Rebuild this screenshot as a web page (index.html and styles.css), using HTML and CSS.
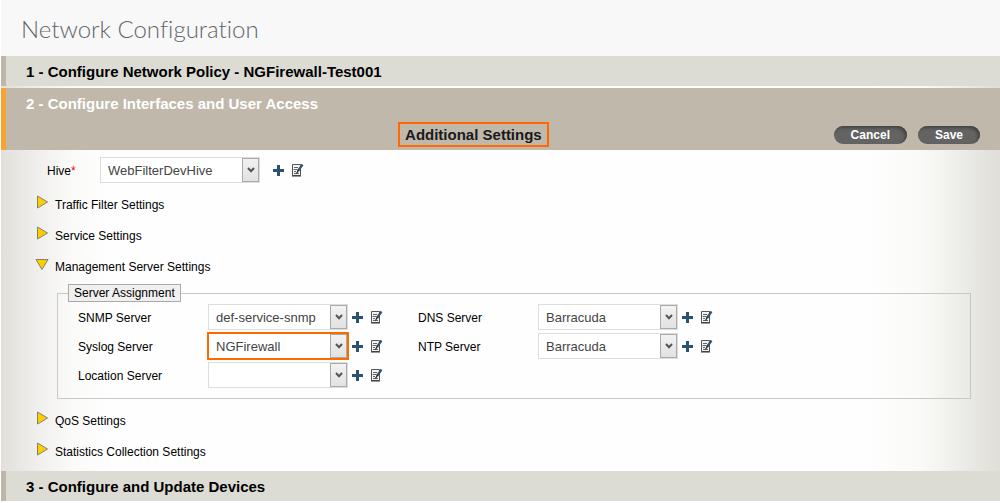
FILE: index.html
```html
<!DOCTYPE html>
<html lang="en">
<head>
  <meta charset="UTF-8">
  <title>Network Configuration</title>
  <meta name="viewport" content="width=device-width, initial-scale=1.0">
  <link rel="stylesheet" href="styles.css">
</head>
<body>

  <!-- shared icons -->
  <svg class="sprite" aria-hidden="true">
    <symbol id="plus" viewBox="0 0 11 11">
      <path d="M4 0h3v4h4v3H7v4H4V7H0V4h4z" fill="#2c5272"/>
    </symbol>
    <symbol id="edit" viewBox="0 0 13 14">
      <path d="M1.5 1.5h8v11h-8z" fill="#f4f4f4" stroke="#555"/>
      <path d="M1 13h9" stroke="#333"/>
      <path d="M3 4.500h4M2.500 6.500h4M3 8.500h2M3 10.500h5" stroke="#666"/>
      <path d="M11.500 1.500L7 8" stroke="#34536f" stroke-width="2.200"/>
      <path d="M7.500 7L5.500 10.500" stroke="#222" stroke-width="1.200"/>
    </symbol>
    <symbol id="chevron" viewBox="0 0 8 6">
      <path d="M1 1l3 3.200L7 1" fill="none" stroke="#555" stroke-width="2"/>
    </symbol>
    <symbol id="closed" viewBox="0 0 14 14">
      <path d="M2.500 1v12L12.500 7z" fill="#fc0" stroke="#85816f"/>
    </symbol>
    <symbol id="open" viewBox="0 0 14 14">
      <path d="M1 2.500h12L7 12.500z" fill="#fc0" stroke="#85816f"/>
    </symbol>
  </svg>

  <header class="page-header">
    <h1>Network Configuration</h1>
  </header>

  <main class="steps">
    <h2 class="step">1 - Configure Network Policy - NGFirewall-Test001</h2>

    <section class="current">
      <h2>2 - Configure Interfaces and User Access</h2>
      <div class="toolbar">
        <h3>Additional Settings</h3>
        <div class="actions">
          <button type="button">Cancel</button>
          <button type="button">Save</button>
        </div>
      </div>
    </section>

    <form class="settings">
      <div class="field hive">
        <label for="hive">Hive<span class="required">*</span></label>
        <div class="select">
          <select id="hive"><option>WebFilterDevHive</option></select>
          <span class="arrow"><svg><use href="#chevron"/></svg></span>
        </div>
        <button type="button" class="icon" aria-label="Add"><svg class="plus"><use href="#plus"/></svg></button>
        <button type="button" class="icon" aria-label="Edit"><svg class="edit"><use href="#edit"/></svg></button>
      </div>

      <button type="button" class="group"><svg><use href="#closed"/></svg><span>Traffic Filter Settings</span></button>
      <button type="button" class="group"><svg><use href="#closed"/></svg><span>Service Settings</span></button>
      <button type="button" class="group" aria-expanded="true"><svg><use href="#open"/></svg><span>Management Server Settings</span></button>

      <fieldset>
        <legend>Server Assignment</legend>
        <div class="servers">
          <div class="field">
            <label for="snmp">SNMP Server</label>
            <div class="select">
              <select id="snmp"><option>def-service-snmp</option></select>
              <span class="arrow"><svg><use href="#chevron"/></svg></span>
            </div>
            <button type="button" class="icon" aria-label="Add"><svg class="plus"><use href="#plus"/></svg></button>
            <button type="button" class="icon" aria-label="Edit"><svg class="edit"><use href="#edit"/></svg></button>
          </div>
          <div class="field">
            <label for="dns">DNS Server</label>
            <div class="select">
              <select id="dns"><option>Barracuda</option></select>
              <span class="arrow"><svg><use href="#chevron"/></svg></span>
            </div>
            <button type="button" class="icon" aria-label="Add"><svg class="plus"><use href="#plus"/></svg></button>
            <button type="button" class="icon" aria-label="Edit"><svg class="edit"><use href="#edit"/></svg></button>
          </div>
          <div class="field">
            <label for="syslog">Syslog Server</label>
            <div class="select highlight">
              <select id="syslog"><option>NGFirewall</option></select>
              <span class="arrow"><svg><use href="#chevron"/></svg></span>
            </div>
            <button type="button" class="icon" aria-label="Add"><svg class="plus"><use href="#plus"/></svg></button>
            <button type="button" class="icon" aria-label="Edit"><svg class="edit"><use href="#edit"/></svg></button>
          </div>
          <div class="field">
            <label for="ntp">NTP Server</label>
            <div class="select">
              <select id="ntp"><option>Barracuda</option></select>
              <span class="arrow"><svg><use href="#chevron"/></svg></span>
            </div>
            <button type="button" class="icon" aria-label="Add"><svg class="plus"><use href="#plus"/></svg></button>
            <button type="button" class="icon" aria-label="Edit"><svg class="edit"><use href="#edit"/></svg></button>
          </div>
          <div class="field">
            <label for="location">Location Server</label>
            <div class="select">
              <select id="location"><option></option></select>
              <span class="arrow"><svg><use href="#chevron"/></svg></span>
            </div>
            <button type="button" class="icon" aria-label="Add"><svg class="plus"><use href="#plus"/></svg></button>
            <button type="button" class="icon" aria-label="Edit"><svg class="edit"><use href="#edit"/></svg></button>
          </div>
        </div>
      </fieldset>

      <button type="button" class="group"><svg><use href="#closed"/></svg><span>QoS Settings</span></button>
      <button type="button" class="group"><svg><use href="#closed"/></svg><span>Statistics Collection Settings</span></button>
    </form>

    <h2 class="step">3 - Configure and Update Devices</h2>
  </main>

</body>
</html>
```
FILE: styles.css
```css
* {
  box-sizing: border-box;
  margin: 0;
  padding: 0;
}

body {
  background: #fff;
  color: #000;
  font-family: "Liberation Sans", Arial, sans-serif;
  font-size: 12px;
  padding-left: 1px;
}

button, select {
  font-family: inherit;
  border: none;
  background: none;
}

.sprite {
  display: none;
}

.page-header {
  background: #f8f8f8;
  height: 56px;
  padding: 14px 20px 0;
}

h1 {
  font-family: Lato, sans-serif;
  font-size: 24px;
  font-weight: 300;
  font-variant-ligatures: none;
  line-height: 30px;
  color: #63666a;
}

h2 {
  font-size: 15px;
  line-height: 18px;
}

.steps {
  background: linear-gradient(to right, #e1e0da 0, #f1f0ee 40px, #fafaf9 70px, #fefefe 110px, #fefefe calc(100% - 130px), #f9f9f7 calc(100% - 75px), #edede9 calc(100% - 40px), #dfded8 100%);
}

.step {
  background: #dcdcd4;
  border-left: 5px solid #bdb6a9;
  padding: 7px 20px 5px;
}

.current {
  margin-top: 2px;
  background: #bfb8ab;
  border-left: 5px solid #f7a233;
  padding: 7px 0 3px;
}

.current h2 {
  color: #fff;
  padding-left: 20px;
}

/* title sits slightly left of the middle, buttons at the right */
.toolbar {
  display: grid;
  grid-template-columns: 10fr auto 11fr;
  align-items: center;
  padding-right: 20px;
  margin-top: 9px;
}

.toolbar h3 {
  grid-column: 2;
  font-size: 15px;
  line-height: 21px;
  color: #1a1a1a;
  border: 2px solid #ff6a00;
  padding: 0 5px;
}

.actions {
  display: flex;
  justify-content: flex-end;
  gap: 11px;
}

.actions button {
  background: #636363;
  color: #fff;
  font-size: 12px;
  font-weight: bold;
  line-height: 18px;
  padding: 0 17px;
  border-radius: 9px;
  box-shadow: inset -2px 2px 3px #444;
}

.settings {
  padding: 7px 29px 4px 34px;
}

.field {
  display: flex;
  align-items: center;
}

.field label {
  width: 130px;
  line-height: 14px;
  padding-top: 2px;
}

.hive {
  margin-bottom: 6px;
}

.hive label {
  width: 65px;
  padding-left: 12px;
}

.required {
  color: #f00;
}

.select {
  position: relative;
  width: 140px;
  height: 26px;
  margin-right: 4px;
}

.hive .select {
  width: 160px;
  margin-right: 13px;
}

.select select {
  appearance: none;
  width: 100%;
  height: 100%;
  background: #fff;
  border: 1px solid #ddd;
  color: #444;
  font-size: 13px;
  padding: 0 20px 0 7px;
}

.arrow {
  position: absolute;
  top: 1px;
  right: 1px;
  bottom: 1px;
  width: 17px;
  display: flex;
  align-items: center;
  justify-content: center;
  background: linear-gradient(#f2f2f2, #e2e2e2);
  border: 1px solid #aaa;
  pointer-events: none;
}

.arrow svg {
  width: 8px;
  height: 6px;
}

.highlight {
  outline: 2px solid #ff6a00;
  outline-offset: -1px;
}

.icon {
  display: flex;
  margin-right: 7px;
}

.plus {
  width: 11px;
  height: 11px;
}

.edit {
  width: 13px;
  height: 14px;
}

.group {
  display: flex;
  gap: 6px;
  width: 100%;
  height: 31px;
  padding-top: 6px;
  font-size: 12px;
  line-height: 14px;
  text-align: left;
}

.group svg {
  width: 14px;
  height: 14px;
}

.group span {
  padding-top: 3px;
}

fieldset {
  border: 1px solid #c8c8c8;
  margin: 2px 0 6px 22px;
  padding: 2px 10px 10px;
}

legend {
  background: #f0f0f0;
  border: 1px solid #aaa;
  line-height: 16px;
  padding: 0 5px;
}

.servers {
  display: grid;
  grid-template-columns: 340px 1fr;
  row-gap: 3px;
  padding-left: 10px;
}

/* the right column has shorter labels */
.servers .field:nth-child(even) label {
  width: 120px;
}
```
